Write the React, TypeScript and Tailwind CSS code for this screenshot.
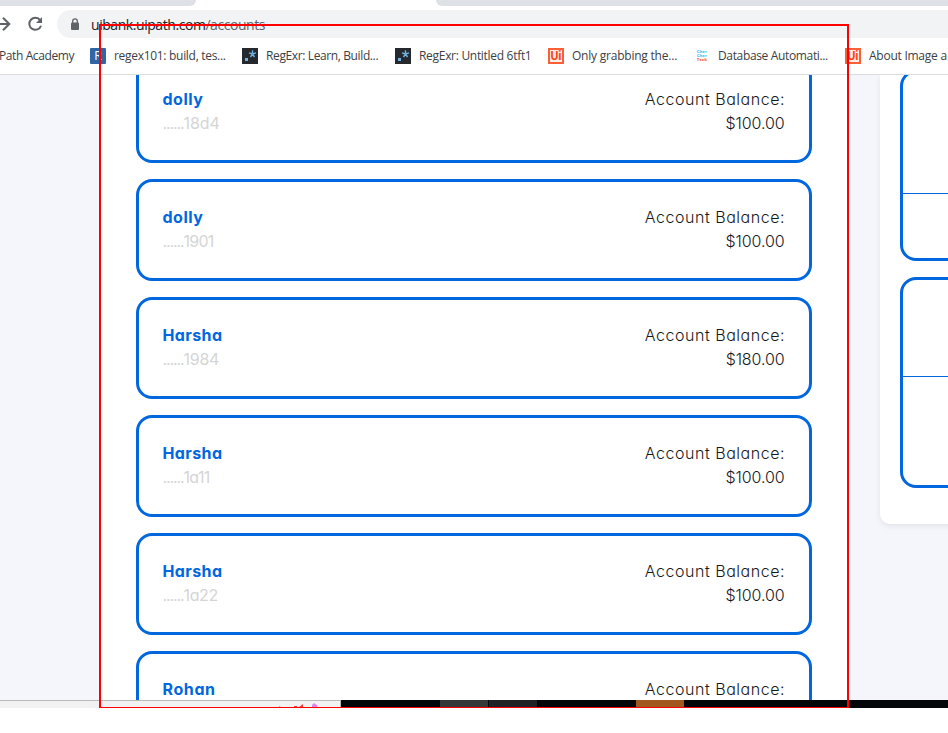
import React from 'react';

type Account = { name: string; number?: string; balance?: string; nt: string; dt: string };

const accounts: Account[] = [
  { name: 'dolly', number: '18d4', balance: '$100.00', nt: 'tracking-[0.5px]', dt: 'tracking-[-0.1px]' },
  { name: 'dolly', number: '1901', balance: '$100.00', nt: 'tracking-[0.5px]', dt: 'tracking-[-0.8px]' },
  { name: 'Harsha', number: '1984', balance: '$180.00', nt: 'tracking-[0.4px]', dt: 'tracking-[-0.3px]' },
  { name: 'Harsha', number: '1a11', balance: '$100.00', nt: 'tracking-[0.4px]', dt: 'tracking-[-0.9px]' },
  { name: 'Harsha', number: '1a22', balance: '$100.00', nt: 'tracking-[0.4px]', dt: 'tracking-[-0.4px]' },
  { name: 'Rohan', nt: 'tracking-[0.6px]', dt: 'tracking-[-0.1px]' },
];

function RegexIcon() {
  return (
    <svg width="16" height="16" viewBox="0 0 16 16" className="shrink-0">
      <rect width="16" height="16" fill="#25292d" />
      <rect x="3" y="10" width="3" height="3" fill="#70b0e0" />
      <path d="M10.500 2.300v3.700M7 4.800l3.500 1.200M14 4.800l-3.500 1.200M8.500 9l2-3M12.500 9l-2-3" stroke="#70b0e0" strokeWidth="1.400" fill="none" />
    </svg>
  );
}

function UiIcon() {
  return (
    <span className="flex h-4 w-4 shrink-0 items-center justify-center border-2 border-[#fa4616]/85 bg-[#fdece7] font-['Roboto',sans-serif] text-[12px] leading-none font-bold text-[#fa4616]">
      Ui
    </span>
  );
}

function RIcon() {
  return (
    <span className="flex h-4 w-4 shrink-0 items-center justify-center rounded-[1px] bg-[#2f66a5] text-[12px] leading-none text-white">R</span>
  );
}

function CherIcon() {
  return (
    <span className="flex h-4 w-4 shrink-0 flex-col items-center justify-center font-['Roboto',sans-serif] text-[4px] leading-[4px] font-black tracking-[0.4px] text-[#35b8e8]">
      <span>Cher</span>
      <span>Cher</span>
      <span className="text-[#f0503c]">Tech</span>
    </span>
  );
}

function Bookmark({ icon, label, width, tracking }: { icon: React.ReactNode; label: string; width: string; tracking: string }) {
  return (
    <div className={`flex shrink-0 items-center gap-2 whitespace-nowrap ${width}`}>
      {icon}
      <span className={tracking}>{label}</span>
    </div>
  );
}

function Toolbar() {
  return (
    <div className="flex h-8 items-center">
      <svg width="57" height="32" viewBox="0 0 57 32" className="shrink-0" fill="none" stroke="#5f6368" strokeWidth="2">
        <path d="M-4 18H9M3 11.700L9.300 18L3 24.300" />
        <path d="M40.200 14.300A6 6 0 1 0 41 19.700" />
        <path d="M42 11v6h-6z" fill="#5f6368" stroke="none" />
      </svg>
      <div className="mt-1 flex h-7 flex-1 items-center rounded-l-full bg-[#f1f3f4] pl-[13px]">
        <svg width="10" height="13" viewBox="0 0 10 13" className="shrink-0">
          <path d="M2.700 5V3.200a2.300 2.300 0 0 1 4.600 0V5" fill="none" stroke="#5f6368" strokeWidth="1.300" />
          <rect x="1" y="4.500" width="8" height="7.500" rx="1" fill="#5f6368" />
        </svg>
        <span className="ml-[11px] text-[14px] tracking-[-0.44px] whitespace-nowrap text-[#5f6368]">
          <span className="text-[#202124]">uibank.uipath.com</span>/accounts
        </span>
      </div>
    </div>
  );
}

function AccountCard({ a }: { a: Account }) {
  return (
    <div className="flex h-[102px] shrink-0 justify-between rounded-2xl border-[3px] border-[#0067df] p-6 pt-[23px] pl-[23.5px] text-base leading-6 whitespace-nowrap">
      <div>
        <div className={`font-bold text-[#0067df] ${a.nt}`}>{a.name}</div>
        {a.number && (
          <div className={`text-[#d5d5d5] ${a.dt}`}>
            <span className="tracking-[-1.1px]">......</span>
            {a.number}
          </div>
        )}
      </div>
      <div className="text-right font-light text-[#16191c]">
        <div className="tracking-[0.53px]">Account Balance:</div>
        {a.balance && <div className="pr-[0.5px] tracking-[-0.1px]">{a.balance}</div>}
      </div>
    </div>
  );
}

export default function App() {
  return (
    <div className="relative h-[733px] w-[948px] overflow-hidden bg-white">
      <div className="h-[75px] border-b border-[#dadce0] bg-white font-['Open_Sans','Noto_Sans',sans-serif]">
        <div className="flex h-1.5 justify-between">
          <div className="w-[196px] rounded-br-md bg-[#dee1e6]" />
          <div className="w-[512px] rounded-bl-md bg-[#dee1e6]" />
        </div>
        <Toolbar />
        <div className="flex h-9 items-center text-[12px] text-[#3c4043]">
          <div className="w-[90px] shrink-0 tracking-[-0.4px] whitespace-nowrap">
            <span className="-ml-px">Path Academy</span>
          </div>
          <Bookmark icon={<RIcon />} label="regex101: build, tes..." width="w-[152px]" tracking="tracking-[-0.3px]" />
          <Bookmark icon={<RegexIcon />} label="RegExr: Learn, Build..." width="w-[153px]" tracking="tracking-[-0.38px]" />
          <Bookmark icon={<RegexIcon />} label="RegExr: Untitled 6tft1" width="w-[153px]" tracking="tracking-[-0.3px]" />
          <Bookmark icon={<UiIcon />} label="Only grabbing the..." width="w-[146px]" tracking="tracking-[-0.22px]" />
          <Bookmark icon={<CherIcon />} label="Database Automati..." width="w-[151px]" tracking="tracking-[-0.35px]" />
          <Bookmark icon={<UiIcon />} label="About Image a" width="w-[103px]" tracking="tracking-[-0.25px]" />
        </div>
      </div>

      <div className="flex h-[625px] overflow-hidden bg-[#f5f6fb] pl-[100px] font-['Inter','Open_Sans',sans-serif] [font-feature-settings:'cv11']">
        <div className="h-[625px] w-[748px] shrink-0 overflow-hidden bg-white pr-9 pl-9">
          <div className="-mt-[14px] flex flex-col gap-4">
            {accounts.map((a, i) => (
              <AccountCard key={i} a={a} />
            ))}
          </div>
        </div>
        <div className="ml-8 h-[449px] w-[200px] shrink-0 rounded-bl-[10px] bg-white pl-5 shadow-[0_2px_6px_rgba(0,0,0,0.08)]">
          <div className="h-[186px] overflow-hidden">
            <div className="-mt-[5px] h-[191px] rounded-2xl border-[3px] border-[#0067df]">
              <div className="h-[121px] border-b border-[#0067df]" />
            </div>
          </div>
          <div className="mt-4 h-[211px] rounded-2xl border-[3px] border-[#0067df]">
            <div className="h-[97px] border-b border-[#0067df]" />
          </div>
        </div>
      </div>

      <div className="flex h-2">
        <div className="w-[340px] border-t border-[#b9b9b9] bg-[#f2f2f2]">
          <svg width="340" height="7" viewBox="0 0 340 7">
            <path d="M279 5h1l1 2h-1z" fill="#c9a03c" />
            <path d="M294 5h3v2h-3zM299 6l4-3v4z" fill="#ee3f37" />
            <path d="M312 4l2-2 3 2 1 3h-6z" fill="#e482ef" />
          </svg>
        </div>
        <div className="w-px bg-[#b9b9b9]" />
        <div className="w-[99px] bg-[#030609]" />
        <div className="w-12 bg-[#343837]" />
        <div className="w-px bg-[#030609]" />
        <div className="w-12 bg-[#202124]" />
        <div className="w-[99px] bg-[#030609]" />
        <div className="w-12 bg-[#a2571d]" />
        <div className="flex-1 bg-[#030609]" />
      </div>

      <div className="absolute top-6 left-[99px] h-[684px] w-[750px] border-2 border-b-[1px] border-[#ff0000]" />
    </div>
  );
}
